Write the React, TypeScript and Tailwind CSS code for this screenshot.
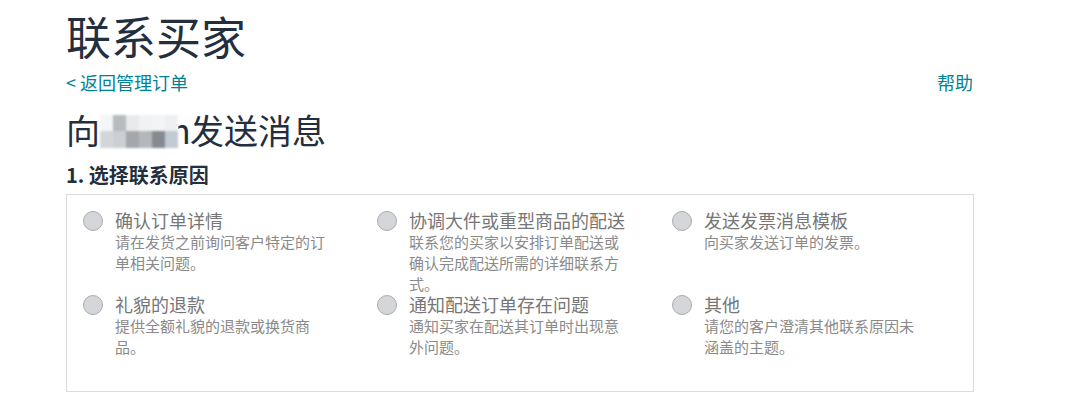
import React from "react";

const items = [
  { t: "确认订单详情", d: "请在发货之前询问客户特定的订单相关问题。" },
  { t: "协调大件或重型商品的配送", d: "联系您的买家以安排订单配送或确认完成配送所需的详细联系方式。" },
  { t: "发送发票消息模板", d: "向买家发送订单的发票。" },
  { t: "礼貌的退款", d: "提供全额礼貌的退款或换货商品。" },
  { t: "通知配送订单存在问题", d: "通知买家在配送其订单时出现意外问题。" },
  { t: "其他", d: "请您的客户澄清其他联系原因未涵盖的主题。" },
];

const top = ["#f4f5f6", "#b7bbbf", "#e9eaec", "#f1f2f3", "#f3f4f5", "#eff0f1"];
const bottom = ["#d3d6d9", "#cdd0d3", "#a3a8ad", "#b4b8bc", "#858b91", "#c2cad2"];

export default function App() {
  return (
    <div
      className="w-[1080px] h-[412px] bg-white overflow-hidden"
      style={{ fontFamily: '"Noto Sans CJK SC", "Noto Sans", sans-serif' }}
    >
      <div className="ml-[66px] w-[908px] pt-[12px]">
        <h1 className="text-[45px] leading-[48px] text-[#232f3e] font-normal">联系买家</h1>
        <div className="mt-[10px] flex justify-between items-center text-[18px] leading-[24px] text-[#008296]">
          <span>&lt; 返回管理订单</span>
          <span className="mr-[1px]">帮助</span>
        </div>
        <h2 className="mt-[16px] text-[34px] leading-[40px] text-[#232f3e] font-normal flex items-center">
          <span>向</span>
          <span className="flex flex-col blur-[1px] mt-[2px]">
            <span className="flex">
              {top.map((c, i) => (
                <span key={i} className="block w-[13px] h-[16px]" style={{ background: c }} />
              ))}
            </span>
            <span className="flex">
              {bottom.map((c, i) => (
                <span key={i} className="block w-[13px] h-[17px]" style={{ background: c }} />
              ))}
            </span>
          </span>
          <span className="inline-block w-[12px] overflow-hidden">
            <span className="inline-block -ml-[8px]">n</span>
          </span>
          <span>发送消息</span>
        </h2>
        <h3 className="mt-[12px] text-[20px] leading-[26px] font-bold text-[#232f3e]">1. 选择联系原因</h3>
        <div className="mt-[6px] border border-[#dcdcdc] pt-[15px] pb-[34px] pl-[16px] grid grid-cols-[294px_295px_1fr]">
          {items.map((it, i) => (
            <div key={i} className="flex items-start">
              <span className="mt-[1px] block w-[20px] h-[20px] rounded-full bg-[#d5d6d9] border border-[#a9abae] shrink-0" />
              <div className="ml-[12px]">
                <div className="text-[18px] leading-[21px] text-[#767676]">{it.t}</div>
                <div className="max-w-[222px] text-[15px] leading-[21px] text-[#8a8a8a]">{it.d}</div>
              </div>
            </div>
          ))}
        </div>
      </div>
    </div>
  );
}
